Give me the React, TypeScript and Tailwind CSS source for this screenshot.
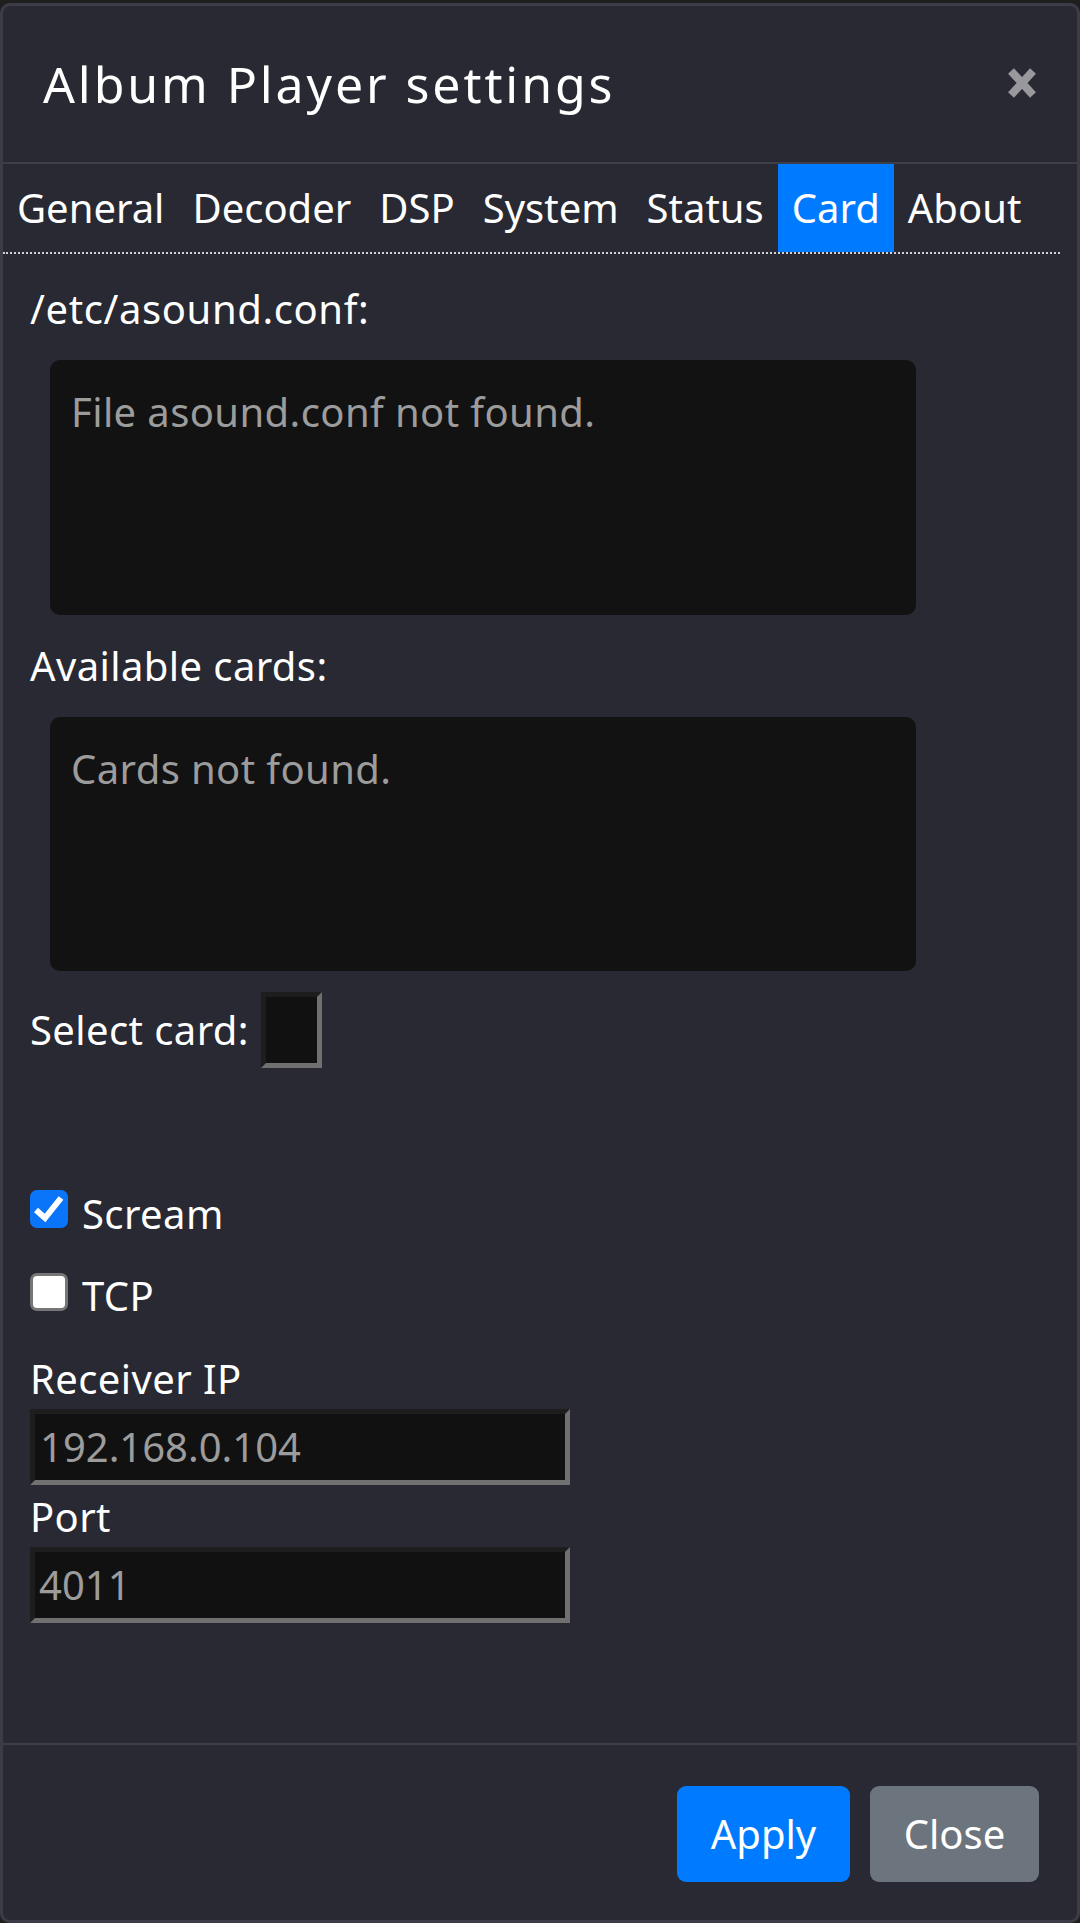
import React from "react";

const Tab = ({ label, active }: { label: string; active?: boolean }) => (
  <div
    className={
      "h-[88px] px-[14px] flex items-center text-white " +
      (active ? "bg-[#007bff]" : "")
    }
  >
    {label}
  </div>
);

const Bevel = "border-[5px] border-t-[#1d1d1d] border-l-[#1d1d1d] border-b-[#707070] border-r-[#707070] bg-[#111111]";

export default function App() {
  return (
    <div className="h-[1923px] bg-[#1f1f1f] pt-[3px] flex flex-col font-['Noto_Sans',sans-serif] text-[40px] leading-[60px] text-white">
      <div className="flex-1 flex flex-col border-[3px] border-[#3b3c46] rounded-[10px] bg-[#282932] overflow-hidden">
        {/* header */}
        <div className="flex justify-between items-start pt-[41px] pb-[40px] pl-[40px] pr-[41px] border-b-2 border-[#3d3e48]">
          <div className="text-[50px] leading-[75px] tracking-[2.9px]">Album Player settings</div>
          <svg width="28" height="32" viewBox="0 0 28 32" className="mt-[20px]">
            <path d="M3 4 L25 28 M25 4 L3 28" stroke="#98989d" strokeWidth="8" strokeLinecap="butt" />
          </svg>
        </div>
        {/* tabs */}
        <div className="flex border-b-2 border-dotted border-[#d0d0d0] mr-[17px]">
          <Tab label="General" />
          <Tab label="Decoder" />
          <Tab label="DSP" />
          <Tab label="System" />
          <Tab label="Status" />
          <Tab label="Card" active />
          <Tab label="About" />
        </div>
        {/* body */}
        <div className="flex-1 flex flex-col pl-[27px] pt-[25px] tracking-[0.4px]">
          <div className="tracking-[0.6px]">/etc/asound.conf:</div>
          <div className="mt-[21px] ml-[20px] w-[866px] h-[255px] rounded-[10px] bg-[#121212] pl-[21px] pt-[22px] text-[#9c9c9c]">
            File asound.conf not found.
          </div>
          <div className="mt-[21px]">Available cards:</div>
          <div className="mt-[21px] ml-[20px] w-[866px] h-[254px] rounded-[10px] bg-[#121212] pl-[21px] pt-[22px] text-[#9c9c9c]">
            Cards not found.
          </div>
          <div className="mt-[20px] h-[78px] flex items-center gap-[12px]">
            <span>Select card:</span>
            <div className={"w-[61px] h-[76px] " + Bevel}></div>
          </div>
          <div className="mt-[115px] flex items-start">
            <div className="mt-[6px] w-[38px] h-[38px] rounded-[7px] bg-[#0a75f8] flex items-center justify-center">
              <svg width="38" height="38" viewBox="0 0 38 38">
                <path d="M6 20 L15 28 L31 8" fill="none" stroke="#ffffff" strokeWidth="6" strokeLinejoin="miter" />
              </svg>
            </div>
            <span className="ml-[14px]">Scream</span>
          </div>
          <div className="mt-[22px] flex items-start">
            <div className="mt-[7px] w-[38px] h-[38px] rounded-[7px] bg-white border-[3px] border-[#767676]"></div>
            <span className="ml-[14px]">TCP</span>
          </div>
          <div className="mt-[23px]">Receiver IP</div>
          <div className={"w-[540px] h-[76px] pl-[5px] flex items-center text-[#9c9c9c] tracking-normal " + Bevel}>192.168.0.104</div>
          <div className="mt-[2px]">Port</div>
          <div className={"w-[540px] h-[76px] pl-[4px] flex items-center text-[#9c9c9c] tracking-normal " + Bevel}>4011</div>
        </div>
        {/* footer */}
        <div className="border-t-2 border-[#3d3e48] pt-[41px] pb-[38px] pr-[38px] flex justify-end gap-[20px]">
          <button className="w-[173px] h-[96px] rounded-[9px] bg-[#007bff] text-white">Apply</button>
          <button className="w-[169px] h-[96px] rounded-[9px] bg-[#6c757d] text-white">Close</button>
        </div>
      </div>
    </div>
  );
}
